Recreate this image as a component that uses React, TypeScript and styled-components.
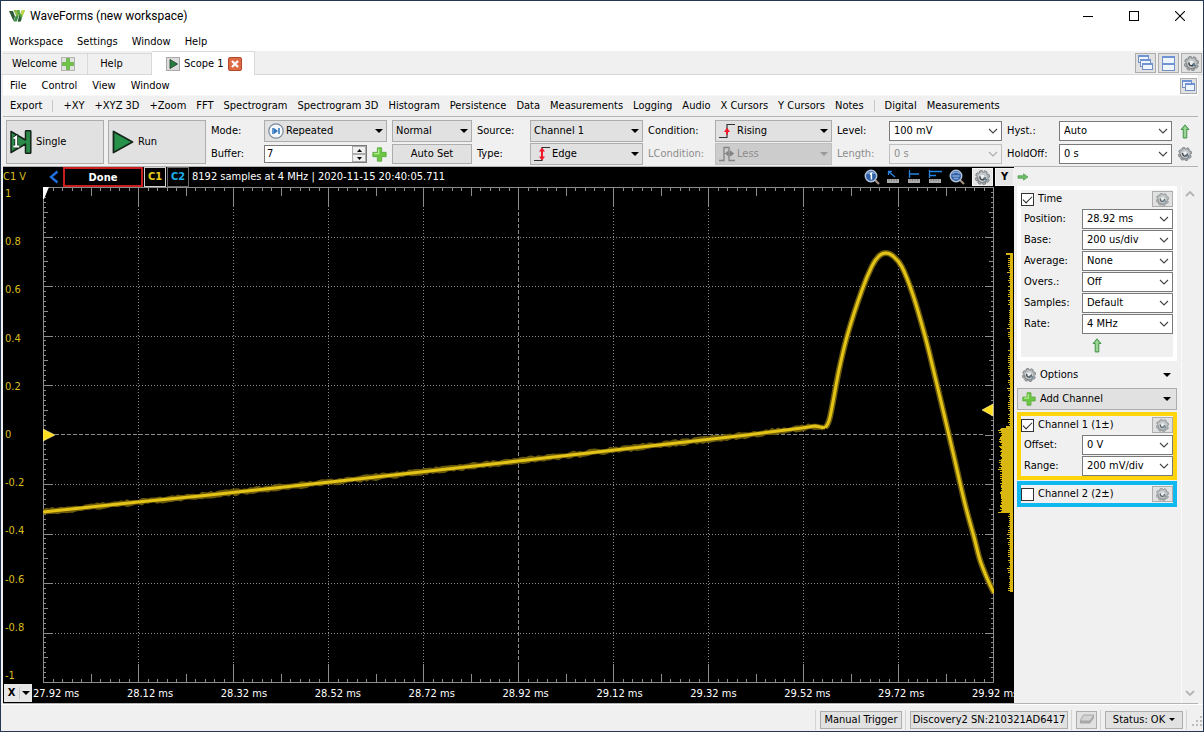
import React, { useId } from 'react';
import styled, { createGlobalStyle } from 'styled-components';

const ui = '"DejaVu Sans Condensed", "DejaVu Sans", Tahoma, sans-serif';

const GlobalStyle = createGlobalStyle`
  *, *::before, *::after { box-sizing: border-box; }
  body { margin: 0; background: #f0f0f0; color: #000; font: 11px/14px ${ui}; font-stretch: condensed; }
  button, input, select { font: inherit; color: inherit; margin: 0; }
  svg { display: block; flex: none; }
`;

/* ---------- window frame ---------- */

const Frame = styled.div`
  display: flex;
  flex-direction: column;
  min-height: 100vh;
  border: 1px solid #26384f;
  background: #f0f0f0;
`;

const TitleBar = styled.header`
  display: flex;
  align-items: center;
  height: 30px;
  padding-left: 8px;
  gap: 5px;
  background: #fff;
`;

const Title = styled.h1`
  flex: 1;
  margin: 0;
  font: 12px/16px Roboto, "Noto Sans", sans-serif;
`;

const CaptionButtons = styled.div`
  display: flex;
`;

const CaptionButton = styled.button`
  display: grid;
  place-items: center;
  width: 46px;
  height: 30px;
  padding: 0;
  border: 0;
  background: none;
`;

const MenuBar = styled.nav<{ $gap: number }>`
  display: flex;
  align-items: center;
  height: 20px;
  padding: 2px 0 0 8px;
  gap: ${p => p.$gap}px;
  background: #fff;
`;

const MenuItem = styled.button`
  padding: 0;
  border: 0;
  background: none;
  white-space: nowrap;
`;

const Spacer = styled.div`
  flex: 1;
`;

const TabStrip = styled.div`
  display: flex;
  align-items: stretch;
  height: 24px;
  padding: 0 1px 0 2px;
  background: #f0f0f0;
  box-shadow: inset 0 -1px #d8d8d8;
`;

const Tab = styled.button<{ $active?: boolean; $width: number }>`
  display: flex;
  align-items: center;
  gap: 4px;
  width: ${p => p.$width}px;
  margin-top: ${p => (p.$active ? 0 : 2)}px;
  padding: 0 0 0 ${p => (p.$active ? 14 : 9)}px;
  border: 1px solid #d9d9d9;
  border-width: 1px 1px ${p => (p.$active ? 0 : 1)}px 0;
  background: ${p => (p.$active ? '#fff' : '#f0f0f0')};
  white-space: nowrap;
`;

const ToolSquare = styled.button<{ $w?: number; $h?: number }>`
  display: grid;
  place-items: center;
  flex: none;
  width: ${p => p.$w ?? 21}px;
  height: ${p => p.$h ?? 20}px;
  padding: 0;
  border: 1px solid #adadad;
  background: #e1e1e1;
`;

const StripTools = styled.div`
  display: flex;
  gap: 2px;
  padding-top: 2px;
`;

const Scope = styled.main`
  display: flex;
  flex-direction: column;
  flex: 1;
  padding: 0 5px 0 2px;
  background: #f0f0f0;
`;

const ScopeMenu = styled(MenuBar)`
  padding: 2px 1px 0 7px;
`;

const ToolBar = styled.div`
  display: flex;
  align-items: center;
  height: 22px;
  padding-left: 7px;
  gap: 10px;
  border-top: 1px solid #f8f8f8;
  border-bottom: 1px solid #b4b4b4;
`;

const Separator = styled.span`
  width: 1px;
  height: 12px;
  background: #c8c8c8;
`;

/* ---------- control strip ---------- */

const Controls = styled.section`
  display: flex;
  gap: 5px;
  height: 50px;
  padding: 3px 5px 2px 3px;
  border-bottom: 1px solid #b4b4b4;
`;

const RunButtons = styled.div`
  display: flex;
  gap: 4px;
`;

const BigButton = styled.button`
  display: flex;
  align-items: center;
  gap: 4px;
  width: 98px;
  height: 44px;
  padding: 0 0 0 3px;
  border: 1px solid #adadad;
  background: #e1e1e1;
`;

const Params = styled.div`
  display: grid;
  flex: 1;
  grid-template-columns:
    48px minmax(0, 123fr) minmax(0, 80fr) 48px minmax(0, 113fr) 62px minmax(0, 117fr)
    47px minmax(0, 113fr) 47px minmax(0, 113fr) 16px;
  grid-template-rows: 22px 22px;
  column-gap: 5px;
  row-gap: 1px;
  align-items: center;
  justify-items: stretch;
`;

const Label = styled.label<{ $dim?: boolean }>`
  color: ${p => (p.$dim ? '#8d8d8d' : '#000')};
  white-space: nowrap;
`;

type Look = 'button' | 'edit';

const ComboBox = styled.div`
  position: relative;
  min-width: 0;
`;

const Select = styled.select<{ $look: Look; $icon: boolean; $tall: boolean }>`
  display: block;
  width: 100%;
  height: ${p => (p.$tall ? 22 : 20)}px;
  padding: 0 16px 0 ${p => (p.$icon ? 21 : p.$look === 'edit' ? 4 : 3)}px;
  border: 1px solid ${p => (p.$look === 'edit' ? '#7a7a7a' : '#adadad')};
  border-radius: 0;
  background: ${p => (p.$look === 'edit' ? '#fff' : '#e1e1e1')};
  appearance: none;
  &:disabled {
    opacity: 1;
    color: #8d8d8d;
    border-color: #bfbfbf;
    background: ${p => (p.$look === 'edit' ? '#f0f0f0' : '#cccccc')};
  }
`;

const ComboIcon = styled.span`
  position: absolute;
  left: 4px;
  top: 50%;
  transform: translateY(-50%);
  pointer-events: none;
`;

const ComboArrow = styled.span`
  position: absolute;
  right: 4px;
  top: 50%;
  transform: translateY(-50%);
  pointer-events: none;
`;

const BufferCell = styled.div`
  display: flex;
  align-items: center;
  gap: 5px;
  min-width: 0;
`;

const SpinBox = styled.div`
  display: flex;
  flex: 1;
  min-width: 0;
  height: 18px;
  border: 1px solid #7a7a7a;
  background: #fff;
`;

const SpinInput = styled.input`
  flex: 1;
  width: 0;
  min-width: 0;
  padding: 0 2px;
  border: 0;
  outline: 0;
  background: none;
`;

const SpinButtons = styled.div`
  display: grid;
  grid-template-rows: 1fr 1fr;
  width: 14px;
`;

const SpinButton = styled.button`
  display: grid;
  place-items: center;
  padding: 0;
  border: 1px solid #adadad;
  background: #f0f0f0;
`;

const PlainButton = styled.button`
  height: 20px;
  padding: 0;
  border: 1px solid #adadad;
  background: #e1e1e1;
  white-space: nowrap;
`;

const IconButton = styled.button`
  display: grid;
  place-items: center;
  flex: none;
  padding: 0;
  border: 0;
  background: none;
`;

/* ---------- plot ---------- */

const Work = styled.div`
  display: flex;
  flex: 1;
  border-bottom: 1px solid #b4b4b4;
`;

const PlotPane = styled.section`
  display: grid;
  flex: 1;
  min-width: 0;
  grid-template-columns: 40px minmax(0, 1fr) 20px;
  grid-template-rows: 20px minmax(0, 1fr) 20px;
  background: #000;
  color: #fff;
`;

const PlotHead = styled.div`
  grid-column: 1 / -1;
  display: flex;
  align-items: center;
  min-width: 0;
`;

const AxisUnit = styled.span`
  width: 45px;
  color: #d9bd1e;
`;

const StateBox = styled.div`
  width: 80px;
  height: 20px;
  margin-left: 3px;
  border: 2px solid #c81e1e;
  font-weight: bold;
  line-height: 17px;
  text-align: center;
`;

const ChannelChip = styled.button<{ $color: string; $line: string }>`
  width: 22px;
  height: 20px;
  margin-left: 1px;
  padding: 0;
  border: 1px solid ${p => p.$line};
  background: #000;
  color: ${p => p.$color};
  font-weight: bold;
`;

const SampleInfo = styled.span`
  flex: 1;
  margin-left: 3px;
  overflow: hidden;
  white-space: nowrap;
`;

const PlotTools = styled.div`
  display: flex;
  align-items: center;
  gap: 6px;
  padding-right: 7px;
`;

const LightButton = styled.button<{ $w: number }>`
  display: grid;
  place-items: center;
  width: ${p => p.$w}px;
  height: 18px;
  padding: 0;
  border: 1px solid #f4f4f4;
  background: #e6e6e6;
  color: #000;
  font-weight: bold;
`;

const HeadButtons = styled.div`
  display: flex;
  gap: 2px;
`;

const YLabels = styled.div`
  display: flex;
  flex-direction: column;
  justify-content: space-between;
  padding-left: 2px;
  color: #d9bd1e;
`;

const Canvas = styled.svg`
  width: 100%;
  height: 100%;
  min-height: 0;
`;

const PlotFoot = styled.div`
  grid-column: 1 / -1;
  display: flex;
  min-width: 0;
`;

const XButton = styled.button`
  display: grid;
  grid-template-columns: 15px 1px 11px;
  align-items: center;
  justify-items: center;
  width: 28px;
  height: 18px;
  margin: 1px 0 0 1px;
  padding: 0;
  border: 0;
  background: #e6e6e6;
  color: #000;
  font-weight: bold;
`;

const XLabels = styled.div`
  display: grid;
  flex: 1;
  min-width: 0;
  overflow: hidden;
  grid-template-columns: repeat(10, minmax(0, 1fr)) 42px;
  padding-left: 1px;
  line-height: 21px;
  white-space: nowrap;
`;

/* ---------- side panel ---------- */

const Side = styled.aside`
  display: flex;
  width: 184px;
  flex: none;
`;

const SideContent = styled.div`
  flex: 1;
  padding: 0 4px 0 3px;
`;

const SideHead = styled.div`
  display: flex;
  align-items: center;
  height: 19px;
`;

const Group = styled.fieldset<{ $color: string; $top?: number }>`
  min-width: 0;
  margin: ${p => p.$top ?? 0}px 0 0;
  padding: 0;
  border: 4px solid ${p => p.$color};
  background: #f0f0f0;
`;

const GroupHead = styled.div`
  display: flex;
  align-items: center;
  justify-content: space-between;
  height: 18px;
`;

const CheckLabel = styled.label`
  display: flex;
  align-items: center;
  gap: 4px;
`;

const Check = styled.input`
  appearance: none;
  display: grid;
  place-items: center;
  width: 13px;
  height: 13px;
  border: 1px solid #333;
  background: #fff;
  &:checked::before {
    content: '';
    width: 9px;
    height: 5px;
    border: solid #222;
    border-width: 0 0 1px 1px;
    transform: translateY(-1px) rotate(-45deg);
  }
`;

const FieldRow = styled.div`
  display: grid;
  grid-template-columns: 58px minmax(0, 1fr);
  align-items: center;
  height: 21px;
  padding-left: 3px;
`;

const ApplyRow = styled.div`
  display: flex;
  justify-content: center;
  padding: 4px 0;
`;

const DropButton = styled.button<{ $flat?: boolean }>`
  display: flex;
  align-items: center;
  gap: 4px;
  width: 100%;
  height: ${p => (p.$flat ? 27 : 22)}px;
  padding: 0 5px 0 4px;
  border: 1px solid ${p => (p.$flat ? 'transparent' : '#adadad')};
  background: ${p => (p.$flat ? 'none' : '#e1e1e1')};
`;

const ScrollTrack = styled.div`
  display: flex;
  flex-direction: column;
  align-items: center;
  justify-content: space-between;
  width: 17px;
  margin-top: 19px;
  padding: 5px 0 7px;
  border-left: 1px solid #fafafa;
`;

/* ---------- status bar ---------- */

const StatusBar = styled.footer`
  display: flex;
  align-items: center;
  justify-content: flex-end;
  gap: 3px;
  height: 27px;
  padding-top: 3px;
  border-top: 1px solid #fff;
`;

const StatusSep = styled.span`
  width: 2px;
  height: 20px;
  border-left: 1px solid #d4d4d4;
`;

const StatusButton = styled.button<{ $w: number }>`
  display: flex;
  align-items: center;
  justify-content: center;
  gap: 4px;
  width: ${p => p.$w}px;
  height: 18px;
  padding: 0;
  border: 1px solid #adadad;
  background: #e1e1e1;
  white-space: nowrap;
`;

/* ---------- icons ---------- */

const Gear = ({ size = 14, faded = false }: { size?: number; faded?: boolean }) => (
  <svg width={size} height={size} viewBox="0 0 16 16" opacity={faded ? 0.8 : 1}>
    <g transform="rotate(-15 8 8)">
      {[0, 45, 90, 135, 180, 225, 270, 315].map(a => (
        <rect key={a} x="6.2" y=".4" width="3.6" height="4" rx="1" fill="#a9adb0" stroke="#74797c" strokeWidth=".8" transform={`rotate(${a} 8 8)`} />
      ))}
      <circle cx="8" cy="8" r="5.4" fill="#c3c7c9" />
      <path d="M3 6.500A5.200 5.200 0 0 0 11 12.400" fill="none" stroke="#85898c" strokeWidth="1.400" />
      <circle cx="8" cy="7.600" r="2.600" fill="#eceeef" />
      <path d="M6 6.200A2.600 2.600 0 1 0 10.600 8.200" fill="none" stroke="#43494d" strokeWidth="1.600" />
      <path d="M8.500 8.800 12 11.800" stroke="#58788c" strokeWidth="1.600" />
    </g>
  </svg>
);

const Plus = ({ size = 14 }: { size?: number }) => (
  <svg width={size} height={size} viewBox="0 0 14 14">
    <path d="M5 .8h4V5h4.200v4H9v4.200H5V9H.8V5H5z" fill="#6cc843" stroke="#58a83a" strokeWidth=".8" strokeLinejoin="round" />
    <path d="M6.200 2v4.200H2" fill="none" stroke="#b4ea92" strokeWidth="1.200" />
  </svg>
);

const TabPlus = () => (
  <svg width="14" height="14" viewBox="0 0 14 14">
    <rect x=".5" y=".5" width="13" height="13" fill="#dfe3dc" stroke="#b2b2b2" />
    <path d="M5.500 1.500h3v4h4v3h-4v4h-3v-4h-4v-3h4z" fill="#6cc843" stroke="#5aa63e" strokeWidth=".7" />
  </svg>
);

const Up = () => (
  <svg width="10" height="15" viewBox="0 0 10 15">
    <path d="M5 .8 9 5.500H6.800V14H3.200V5.500H1z" fill="#7fc67b" stroke="#3f8f45" strokeWidth=".9" strokeLinejoin="round" />
    <path d="M5 3v10" stroke="#b9e4b0" />
  </svg>
);

const Right = () => (
  <svg width="12" height="8" viewBox="0 0 12 8">
    <path d="M1 2.700h5.500V.8L11 4 6.500 7.200V5.300H1z" fill="#6cbd68" stroke="#4f9c55" strokeWidth=".7" />
  </svg>
);

const Tri = ({ color = '#000', w = 8 }: { color?: string; w?: number }) => (
  <svg width={w} height={w / 2} viewBox="0 0 8 4"><path d="M0 0h8L4 4z" fill={color} /></svg>
);

const Chevron = ({ color = '#444', up = false, heavy = false }: { color?: string; up?: boolean; heavy?: boolean }) => (
  <svg width="10" height="6" viewBox="0 0 10 6">
    <path d={up ? 'M1 5 5 1 9 5' : 'M1 1 5 5 9 1'} fill="none" stroke={color} strokeWidth={heavy ? 1.8 : 1.1} />
  </svg>
);

const Logo = () => (
  <svg width="16" height="14" viewBox="0 0 16 14">
    <path d="M0 2h4l2 5.500L4.500 12z" fill="#2d5a3a" />
    <path d="M4.500 12.500 8 3.500l1.500 4-1.800 5z" fill="#3c8d45" />
    <path d="M4.500 1h3L9 5l-1.200 3z" fill="#8bb83c" />
    <path d="M7.500 1h3L11.500 5 13 1h3l-4.500 11.500H9L10 8z" fill="#5ba443" />
    <path d="M13 1h3l-2.500 6.200-1.800-2.800z" fill="#c2d94e" />
    <path d="M8.700 12.500h2.800l1-2.500-2-4z" fill="#2d5a3a" />
  </svg>
);

const Play = ({ w, h }: { w: number; h: number }) => (
  <svg width={w} height={h} viewBox="0 0 22 24">
    <path d="M1.500 1.500 20.500 12 1.500 22.500z" fill="#27924a" stroke="#16281c" strokeWidth="1.800" strokeLinejoin="round" />
  </svg>
);

const SingleIcon = () => (
  <svg width="22" height="24" viewBox="0 0 22 24">
    <path d="M1 1.500 15.500 10V1.500q0-.8.800-.8h3.700q.8 0 .8.800v21q0 .8-.8.800h-3.700q-.8 0-.8-.800V14L1 22.500z" fill="#2c8a49" stroke="#14241a" strokeWidth="1.500" strokeLinejoin="round" />
    <path d="M3.500 8.500 6.200 6.800V16M3.300 16.500h6" fill="none" stroke="#14241a" strokeWidth="3.400" />
    <path d="M3.500 8.500 6.200 6.800V16M3.300 16.500h6" fill="none" stroke="#fff" strokeWidth="2" />
  </svg>
);

const RepeatedIcon = () => (
  <svg width="16" height="16" viewBox="0 0 16 16">
    <circle cx="8" cy="8" r="7.200" fill="#f5f8fb" stroke="#78899c" strokeWidth="1.200" />
    <path d="M5 5v6M11 5v6" stroke="#2f74bd" strokeWidth="1.500" />
    <path d="M6 5l4 3-4 3z" fill="#2f74bd" />
  </svg>
);

const EdgeIcon = ({ both = false }: { both?: boolean }) => (
  <svg width="16" height="16" viewBox="0 0 16 16">
    <path d="M0 14.500h8V1.500h8" fill="none" stroke="#333" strokeWidth="1.200" />
    {both
      ? <path d="M8 1.500 11 5.500H9v5h2L8 14.500 5 10.500h2v-5H5z" fill="#f01828" />
      : <path d="M8 4.500 11 9H9v2.500H7V9H5z" fill="#f01828" />}
  </svg>
);

const PulseIcon = () => (
  <svg width="16" height="16" viewBox="0 0 16 16">
    <path d="M0 14.500h5V1.500h5v13h6" fill="none" stroke="#858585" strokeWidth="1.300" />
    <path d="M5 7.500h10M9.500 5l-3 2.500 3 2.500M11.500 5v5l3-2.500z" fill="#858585" stroke="#858585" />
  </svg>
);

const Pane = ({ x, y, w = 10, h = 7 }: { x: number; y: number; w?: number; h?: number }) => (
  <g>
    <rect x={x + 0.5} y={y + 0.5} width={w} height={h} fill="#eef5ff" stroke="#6f8fc4" />
    <rect x={x} y={y} width={w + 1} height="2" fill="#6f93d2" />
  </g>
);

const CascadeIcon = () => (
  <svg width="17" height="16" viewBox="0 0 17 16"><Pane x={1} y={0} /><Pane x={3} y={4} /><Pane x={5} y={8} h={6} /></svg>
);
const TileIcon = () => (
  <svg width="13" height="15" viewBox="0 0 13 15"><Pane x={0} y={0} w={12} h={7} /><Pane x={0} y={7} w={12} h={7} /></svg>
);
const DockIcon = () => (
  <svg width="13" height="12" viewBox="0 0 13 12"><Pane x={0} y={0} w={9} h={7} /><Pane x={3} y={3} w={9} h={7} /></svg>
);

const Magnifier = ({ one = false }: { one?: boolean }) => (
  <svg width="16" height="16" viewBox="0 0 16 16">
    <path d="M10.500 10.500 15 15" stroke="#a08f80" strokeWidth="2.200" />
    <circle cx="7" cy="7" r="5.700" fill="#2f5fa4" stroke="#b4c3d8" strokeWidth="1.500" />
    <path d="M3.500 5A4.200 4.200 0 0 1 10.500 5" fill="none" stroke="#86a9d8" strokeWidth="1.300" />
    {one ? <path d="M5.800 5.400 7.400 4.400v6" fill="none" stroke="#fff" strokeWidth="1.500" /> : <path d="M3.500 7h7M4.500 9.500h5" stroke="#86a9d8" strokeWidth="1.300" />}
  </svg>
);

const Ruler = ({ d }: { d: string }) => (
  <svg width="15" height="14" viewBox="0 0 15 14">
    <path d={d} fill="none" stroke="#2583e0" strokeWidth="1.300" />
    <rect x="1" y="9" width="12" height="4" fill="#a9a9a9" />
    <path d="M3 9v2M5.500 9v2M8 9v2M10.500 9v2" stroke="#777" strokeWidth=".8" />
  </svg>
);

/* ---------- composite controls ---------- */

type ComboProps = {
  value: string;
  label: string;
  id?: string;
  look?: Look;
  icon?: React.ReactNode;
  disabled?: boolean;
  tall?: boolean;
};

const Combo = ({ value, label, id, look = 'edit', icon, disabled = false, tall = false }: ComboProps) => (
  <ComboBox>
    <Select id={id} aria-label={label} defaultValue={value} disabled={disabled} $look={look} $icon={!!icon} $tall={tall}>
      <option>{value}</option>
    </Select>
    {icon && <ComboIcon>{icon}</ComboIcon>}
    <ComboArrow>
      {look === 'edit' ? <Chevron color={disabled ? '#aaa' : '#444'} /> : <Tri color={disabled ? '#999' : '#000'} />}
    </ComboArrow>
  </ComboBox>
);

const Field = ({ name, value }: { name: string; value: string }) => {
  const id = useId();
  return (
    <FieldRow>
      <Label htmlFor={id}>{name}:</Label>
      <Combo id={id} label={name} value={value} />
    </FieldRow>
  );
};

/* ---------- scope trace ---------- */

const W = 951;
const H = 496;

type Point = [number, number];

const ramp: Point[] = [[0, 325], [95, 315], [157, 309], [315, 292], [475, 274], [704, 248], [759, 241], [772, 239], [782, 241]];
const pulse: Point[] = [
  [782, 241], [787, 230], [796, 183], [805, 146], [819, 103], [829, 79], [836, 69], [843, 66], [850, 69], [859, 80],
  [870, 108], [882, 149], [890, 181], [909, 261], [922, 317], [931, 350], [937, 373], [944, 391], [951, 406],
];

/* Catmull-Rom spline through the sampled points */
const spline = (pts: Point[]) =>
  pts.slice(0, -1).reduce((d, p1, i) => {
    const p0 = pts[i - 1] ?? p1;
    const p2 = pts[i + 1];
    const p3 = pts[i + 2] ?? p2;
    const c = [p1[0] + (p2[0] - p0[0]) / 6, p1[1] + (p2[1] - p0[1]) / 6, p2[0] - (p3[0] - p1[0]) / 6, p2[1] - (p3[1] - p1[1]) / 6];
    return `${d}C${c.map(n => n.toFixed(1)).join(' ')} ${p2[0]} ${p2[1]}`;
  }, `M${pts[0][0]} ${pts[0][1]}`);

const rampPath = `M${ramp.map(p => p.join(' ')).join('L')}`;
const pulsePath = spline(pulse);

const rand = (n: number) => {
  const v = Math.sin(n * 127.1) * 43758.5;
  return v - Math.floor(v);
};

const yAt = (x: number) => {
  const i = Math.max(0, ramp.findIndex(k => k[0] >= x) - 1);
  const [x0, y0] = ramp[i];
  const [x1, y1] = ramp[i + 1];
  return y0 + ((y1 - y0) * (x - x0)) / (x1 - x0);
};

/* uneven band of older acquisitions behind the ramp */
const noiseBand = (() => {
  const top: string[] = [];
  const bottom: string[] = [];
  for (let x = 0; x <= 780; x += 3) {
    const y = yAt(x);
    top.push(`${x} ${(y - 2 - rand(x + 1) * 2).toFixed(1)}`);
    bottom.unshift(`${x} ${(y + 2 + rand(x + 50) * 2).toFixed(1)}`);
  }
  return `M${top.join('L')}L${bottom.join('L')}z`;
})();

const ticks = (() => {
  let d = '';
  for (let i = 0; i <= 100; i++) {
    const len = i % 10 === 0 ? 19 : i % 5 === 0 ? 9 : 4;
    const x = Math.round(i * 9.5) + 0.5;
    d += `M${x} 0v${len}M${x} ${H}v${-len}`;
    const y = Math.round(i * 4.95) + 0.5;
    const l = i % 10 === 0 ? 9 : i % 5 === 0 ? 5 : 3;
    d += `M0 ${y}h${l}M${W} ${y}h${-l}`;
  }
  return d;
})();

const inner = [1, 2, 3, 4, 6, 7, 8, 9];

const Plot = () => (
  <Canvas viewBox={`0 0 ${W} ${H}`} preserveAspectRatio="none" role="img" aria-label="Channel 1 trace">
    <g fill="none" stroke="#8c8c8c" shapeRendering="crispEdges">
      <path d={inner.map(i => `M${i * 95 + 0.5} 19V477M9 ${Math.round(i * 49.5) + 0.5}H942`).join('')} strokeDasharray="1 2" />
      <path d="M475.500 19V477M12 247.500H942" strokeDasharray="4 2" />
      <path d={`M.5 .5H950.500V495.500H.5z${ticks}`} />
    </g>
    <path d="M0 0h6L1 12H0z" fill="#fff" />
    <path d={noiseBand} fill="#6b5a0c" />
    <path d={pulsePath} fill="none" stroke="#6b5a0c" strokeWidth="6" />
    <path d={rampPath + pulsePath} fill="none" stroke="#e3c316" strokeWidth="3" strokeLinejoin="round" />
    <path d="M0 242v12l12-6z" fill="#ffe020" stroke="#fff3b0" strokeWidth=".6" />
    <path d="M950 217v12l-11-6z" fill="#ffe020" stroke="#fff3b0" strokeWidth=".6" />
  </Canvas>
);

const histogram = (() => {
  let d = '';
  for (let y = 66; y < 405; y++) {
    const wide = y > 240 && y < 326;
    const edge = y < 68 || (y > 238 && y < 242);
    const w = wide ? 11 + Math.round(rand(y) * rand(y + 9) * 5) : edge ? 7 : 3 + (y % 2 ? Math.round(rand(y) * 2.6) : 0);
    d += `M19 ${y + 0.5}h${-w}`;
  }
  return d;
})();

const Histogram = () => (
  <Canvas viewBox={`0 0 20 ${H}`} preserveAspectRatio="none" role="img" aria-label="Histogram">
    <path d={histogram} stroke="#d9b60f" shapeRendering="crispEdges" />
  </Canvas>
);

const yScale = ['1', '0.8', '0.6', '0.4', '0.2', '0', '-0.2', '-0.4', '-0.6', '-0.8', '-1'];
const xScale = ['27.92', '28.12', '28.32', '28.52', '28.72', '28.92', '29.12', '29.32', '29.52', '29.72', '29.92'];
const views = ['+XY', '+XYZ 3D', '+Zoom', 'FFT', 'Spectrogram', 'Spectrogram 3D', 'Histogram', 'Persistence', 'Data', 'Measurements', 'Logging', 'Audio', 'X Cursors', 'Y Cursors', 'Notes'];

export default function App() {
  return (
    <>
      <GlobalStyle />
      <Frame>
        <TitleBar>
          <Logo />
          <Title>WaveForms (new workspace)</Title>
          <CaptionButtons>
            <CaptionButton aria-label="Minimize"><svg width="10" height="10"><path d="M0 5.500h10" stroke="#000" /></svg></CaptionButton>
            <CaptionButton aria-label="Maximize"><svg width="10" height="10"><rect x=".5" y=".5" width="9" height="9" fill="none" stroke="#000" /></svg></CaptionButton>
            <CaptionButton aria-label="Close"><svg width="10" height="10"><path d="M0 0 10 10M10 0 0 10" stroke="#000" strokeWidth="1.100" /></svg></CaptionButton>
          </CaptionButtons>
        </TitleBar>
        <MenuBar $gap={14}>
          {['Workspace', 'Settings', 'Window', 'Help'].map(m => <MenuItem key={m}>{m}</MenuItem>)}
        </MenuBar>
        <TabStrip>
          <Tab $width={85}>Welcome <TabPlus /></Tab>
          <Tab $width={64}>&nbsp;Help</Tab>
          <Tab $width={103} $active>
            <svg width="14" height="14" viewBox="0 0 14 14">
              <rect x=".5" y=".5" width="13" height="13" fill="#dcdcdc" stroke="#a8a8a8" />
              <path d="M4 2.500 11.500 7 4 11.500z" fill="#27803f" stroke="#173522" strokeWidth=".8" />
            </svg>
            Scope 1
            <svg width="14" height="14" viewBox="0 0 14 14">
              <rect x=".5" y=".5" width="13" height="13" rx="1.500" fill="#dc6a45" stroke="#b34a2c" />
              <path d="M4 4 10 10M10 4 4 10" stroke="#fff" strokeWidth="2.200" />
            </svg>
          </Tab>
          <Spacer />
          <StripTools>
            <ToolSquare aria-label="Cascade windows"><CascadeIcon /></ToolSquare>
            <ToolSquare aria-label="Tile windows"><TileIcon /></ToolSquare>
            <ToolSquare aria-label="Settings"><Gear size={15} /></ToolSquare>
          </StripTools>
        </TabStrip>

        <Scope>
          <ScopeMenu $gap={15}>
            {['File', 'Control', 'View', 'Window'].map(m => <MenuItem key={m}>{m}</MenuItem>)}
            <Spacer />
            <ToolSquare $w={17} $h={16} aria-label="Undock"><DockIcon /></ToolSquare>
          </ScopeMenu>
          <ToolBar>
            <MenuItem>Export</MenuItem>
            <Separator />
            {views.map(v => <MenuItem key={v}>{v}</MenuItem>)}
            <Separator />
            <MenuItem>Digital</MenuItem>
            <MenuItem>Measurements</MenuItem>
          </ToolBar>

          <Controls>
            <RunButtons>
              <BigButton><SingleIcon />Single</BigButton>
              <BigButton><Play w={22} h={24} />Run</BigButton>
            </RunButtons>
            <Params>
              <Label htmlFor="mode">Mode:</Label>
              <Combo tall id="mode" label="Mode" look="button" icon={<RepeatedIcon />} value="Repeated" />
              <Combo tall label="Trigger mode" look="button" value="Normal" />
              <Label htmlFor="source">Source:</Label>
              <Combo tall id="source" label="Source" look="button" value="Channel 1" />
              <Label htmlFor="condition">Condition:</Label>
              <Combo tall id="condition" label="Condition" look="button" icon={<EdgeIcon />} value="Rising" />
              <Label htmlFor="level">Level:</Label>
              <Combo id="level" label="Level" value="100 mV" />
              <Label htmlFor="hyst">Hyst.:</Label>
              <Combo id="hyst" label="Hysteresis" value="Auto" />
              <IconButton aria-label="Collapse"><Up /></IconButton>

              <Label htmlFor="buffer">Buffer:</Label>
              <BufferCell>
                <SpinBox>
                  <SpinInput id="buffer" defaultValue="7" />
                  <SpinButtons>
                    <SpinButton aria-label="Next buffer"><svg width="5" height="3"><path d="M0 3h5L2.500 0z" /></svg></SpinButton>
                    <SpinButton aria-label="Previous buffer"><svg width="5" height="3"><path d="M0 0h5L2.500 3z" /></svg></SpinButton>
                  </SpinButtons>
                </SpinBox>
                <IconButton aria-label="Add buffer"><Plus size={15} /></IconButton>
              </BufferCell>
              <PlainButton>Auto Set</PlainButton>
              <Label htmlFor="type">Type:</Label>
              <Combo tall id="type" label="Type" look="button" icon={<EdgeIcon both />} value="Edge" />
              <Label htmlFor="lcondition" $dim>LCondition:</Label>
              <Combo tall id="lcondition" label="Length condition" look="button" icon={<PulseIcon />} value="Less" disabled />
              <Label htmlFor="length" $dim>Length:</Label>
              <Combo id="length" label="Length" value="0 s" disabled />
              <Label htmlFor="holdoff">HoldOff:</Label>
              <Combo id="holdoff" label="HoldOff" value="0 s" />
              <IconButton aria-label="Trigger settings"><Gear /></IconButton>
            </Params>
          </Controls>

          <Work>
            <PlotPane>
              <PlotHead>
                <AxisUnit>C1 V</AxisUnit>
                <IconButton aria-label="Previous">
                  <svg width="12" height="14" viewBox="0 0 12 14"><path d="M9.500 1.500 3 7l6.500 5.500" fill="none" stroke="#1f6fe0" strokeWidth="2.400" /></svg>
                </IconButton>
                <StateBox>Done</StateBox>
                <ChannelChip $color="#e8cc1c" $line="#d0d0d0">C1</ChannelChip>
                <ChannelChip $color="#1cb0ec" $line="#6c6c6c">C2</ChannelChip>
                <SampleInfo>8192 samples at 4 MHz | 2020-11-15 20:40:05.711</SampleInfo>
                <PlotTools>
                  <IconButton aria-label="Zoom to one"><Magnifier one /></IconButton>
                  <IconButton aria-label="Free cursor"><Ruler d="M2 1.500h4M2.500 1v4M3 2l6 5" /></IconButton>
                  <IconButton aria-label="Cursor"><Ruler d="M2.500 0v8M3 4h9" /></IconButton>
                  <IconButton aria-label="Delta cursors"><Ruler d="M1.500 0v8M2 1.500h12M2 5.500h6" /></IconButton>
                  <IconButton aria-label="Zoom to fit"><Magnifier /></IconButton>
                </PlotTools>
                <HeadButtons>
                  <LightButton $w={21} aria-label="Plot settings"><Gear size={15} /></LightButton>
                  <LightButton $w={19}>Y</LightButton>
                </HeadButtons>
              </PlotHead>
              <YLabels>{yScale.map(v => <span key={v}>{v}</span>)}</YLabels>
              <Plot />
              <Histogram />
              <PlotFoot>
                <XButton>
                  <span>X</span>
                  <Separator />
                  <Tri />
                </XButton>
                <XLabels>{xScale.map(v => <span key={v}>{v} ms</span>)}</XLabels>
              </PlotFoot>
            </PlotPane>

            <Side>
              <SideContent>
                <SideHead><IconButton aria-label="Hide panel"><Right /></IconButton></SideHead>
                <Group $color="#fff">
                  <GroupHead>
                    <CheckLabel><Check type="checkbox" defaultChecked />Time</CheckLabel>
                    <ToolSquare $h={16} aria-label="Time settings"><Gear size={13} faded /></ToolSquare>
                  </GroupHead>
                  <Field name="Position" value="28.92 ms" />
                  <Field name="Base" value="200 us/div" />
                  <Field name="Average" value="None" />
                  <Field name="Overs." value="Off" />
                  <Field name="Samples" value="Default" />
                  <Field name="Rate" value="4 MHz" />
                  <ApplyRow><IconButton aria-label="Collapse time"><Up /></IconButton></ApplyRow>
                </Group>
                <DropButton $flat><Gear />Options<Spacer /><Tri /></DropButton>
                <DropButton><Plus />Add Channel<Spacer /><Tri /></DropButton>
                <Group $color="#ffd40a" $top={2}>
                  <GroupHead>
                    <CheckLabel><Check type="checkbox" defaultChecked />Channel 1 (1±)</CheckLabel>
                    <ToolSquare $h={16} aria-label="Channel 1 settings"><Gear size={13} faded /></ToolSquare>
                  </GroupHead>
                  <Field name="Offset" value="0 V" />
                  <Field name="Range" value="200 mV/div" />
                </Group>
                <Group $color="#0fb8ee" $top={1}>
                  <GroupHead>
                    <CheckLabel><Check type="checkbox" />Channel 2 (2±)</CheckLabel>
                    <ToolSquare $h={16} aria-label="Channel 2 settings"><Gear size={13} faded /></ToolSquare>
                  </GroupHead>
                </Group>
              </SideContent>
              <ScrollTrack>
                <Chevron up heavy color="#b4b4b4" />
                <Chevron heavy color="#b4b4b4" />
              </ScrollTrack>
            </Side>
          </Work>
        </Scope>

        <StatusBar>
          <StatusSep />
          <StatusButton $w={82}>Manual Trigger</StatusButton>
          <StatusSep />
          <StatusButton $w={158}>Discovery2 SN:210321AD6417</StatusButton>
          <StatusSep />
          <StatusButton $w={21} aria-label="Erase">
            <svg width="16" height="11" viewBox="0 0 16 11">
              <path d="M4.500 1h10.500l-4 6H1z" fill="#d4d4d4" stroke="#999" strokeWidth=".8" />
              <path d="M1 7h10v2.500H1zM11 7l4-6v3l-4 5.500z" fill="#a8a8a8" />
            </svg>
          </StatusButton>
          <StatusSep />
          <StatusButton $w={78}>Status: OK <Tri w={6} /></StatusButton>
          <StatusSep />
          <svg width="12" height="14" viewBox="0 0 12 14">
            <path d="M9 3h2v2H9zM9 7h2v2H9zM9 11h2v2H9zM5 7h2v2H5zM5 11h2v2H5zM1 11h2v2H1z" fill="#bcbcbc" />
          </svg>
        </StatusBar>
      </Frame>
    </>
  );
}
